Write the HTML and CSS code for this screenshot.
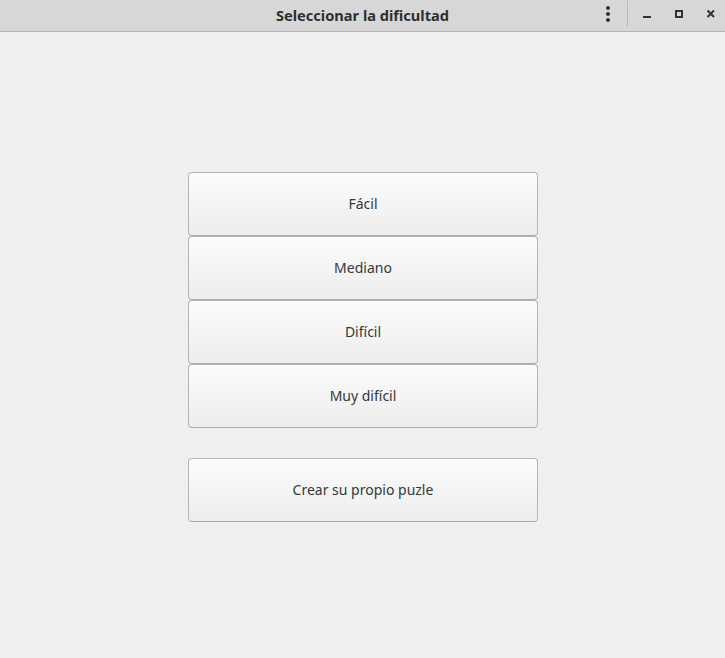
FILE: index.html
```html
<!DOCTYPE html>
<html lang="es">
<head>
<meta charset="utf-8">
<title>Seleccionar la dificultad</title>
<link rel="stylesheet" href="styles.css">
</head>
<body>
<div class="window">
  <header class="titlebar">
    <div class="tb-left"></div>
    <div class="tb-title">Seleccionar la dificultad</div>
    <div class="tb-right">
      <div class="tb-menu">
        <svg width="26" height="31" viewBox="0 0 26 31"><circle cx="13" cy="8" r="2" fill="#333"/><circle cx="13" cy="14" r="2" fill="#333"/><circle cx="13" cy="20" r="2" fill="#333"/></svg>
      </div>
      <div class="tb-sep"></div>
      <div class="tb-btn w31">
        <svg width="31" height="31" viewBox="0 0 31 31"><rect x="11" y="16" width="8" height="2" fill="#333"/></svg>
      </div>
      <div class="tb-btn w32">
        <svg width="32" height="31" viewBox="0 0 32 31"><rect x="13" y="11" width="6" height="6" fill="none" stroke="#333" stroke-width="2"/></svg>
      </div>
      <div class="tb-btn w30">
        <svg width="30" height="31" viewBox="0 0 30 31"><path d="M12.5 10.5 L19 17 M19 10.5 L12.5 17" stroke="#333" stroke-width="2" fill="none"/></svg>
      </div>
    </div>
  </header>
  <main class="content">
    <div class="choices">
      <div class="group">
        <button class="btn">Fácil</button>
        <button class="btn">Mediano</button>
        <button class="btn">Difícil</button>
        <button class="btn">Muy difícil</button>
      </div>
      <button class="btn">Crear su propio puzle</button>
    </div>
  </main>
</div>
</body>
</html>
```

FILE: styles.css
```css
html, body {
  margin: 0;
  padding: 0;
}
body {
  width: 725px;
  height: 658px;
  background: #efefef;
  font-family: "Noto Sans", "Open Sans", sans-serif;
  color: #3c3c3c;
  overflow: hidden;
}
.window {
  display: flex;
  flex-direction: column;
  height: 658px;
}
.titlebar {
  height: 31px;
  border-bottom: 1px solid #b3b3b3;
  background: #d7d7d7;
  display: grid;
  grid-template-columns: 1fr auto 1fr;
  align-items: center;
}
.tb-title {
  font-weight: bold;
  font-size: 14.6px;
  color: #2f2f2f;
  padding-bottom: 2px;
}
.tb-right {
  justify-self: end;
  display: flex;
  align-items: flex-start;
  height: 31px;
}
.tb-menu {
  width: 26px;
  height: 31px;
}
.tb-menu svg, .tb-btn svg {
  display: block;
}
.tb-sep {
  width: 1px;
  height: 26px;
  margin: 1px 4px 0 6px;
  background: #b9b9b9;
}
.tb-btn {
  height: 31px;
}
.w31 { width: 31px; }
.w32 { width: 32px; }
.w30 { width: 30px; }
.content {
  flex: 1;
  display: flex;
  justify-content: center;
  padding-top: 140px;
  padding-left: 1px;
}
.choices {
  width: 350px;
  display: flex;
  flex-direction: column;
  gap: 30px;
}
.group {
  display: flex;
  flex-direction: column;
}
.btn {
  box-sizing: border-box;
  height: 64px;
  width: 350px;
  margin: 0;
  border: 1px solid #b5b5b2;
  border-bottom-color: #a9a9a6;
  border-radius: 4px;
  background: linear-gradient(#fcfcfc, #ededed);
  font-family: "Noto Sans", "Open Sans", sans-serif;
  font-size: 14px;
  color: #33383a;
  padding: 0 0 2px 0;
}
```
